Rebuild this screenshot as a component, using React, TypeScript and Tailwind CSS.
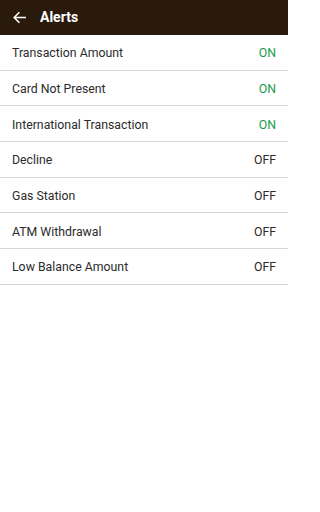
import React from "react";

const alerts = [
  { name: "Transaction Amount", on: true },
  { name: "Card Not Present", on: true },
  { name: "International Transaction", on: true },
  { name: "Decline", on: false },
  { name: "Gas Station", on: false },
  { name: "ATM Withdrawal", on: false },
  { name: "Low Balance Amount", on: false },
];

export default function App() {
  return (
    <div className="w-[288px] h-[512px] bg-white font-['Roboto',sans-serif]">
      <header className="h-[35px] bg-[#2a1a0b] flex items-center pl-[12px] gap-[13px]">
        <svg width="15" height="15" viewBox="0 0 24 24" fill="none" stroke="white" strokeWidth="2.5" strokeLinecap="square">
          <path d="M21 12H4M11 4.5L3.5 12L11 19.5" />
        </svg>
        <h1 className="text-white text-[14px] font-bold">Alerts</h1>
      </header>
      <ul>
        {alerts.map((a) => (
          <li key={a.name} className="h-[35.7px] flex items-center justify-between pl-3 pr-3 pt-[2px] border-b border-[#d6d6d6] text-[12.3px] text-[#2b2b2b]">
            <span>{a.name}</span>
            <span className={a.on ? "text-[#1a9b4b]" : "text-[#2b2b2b]"}>{a.on ? "ON" : "OFF"}</span>
          </li>
        ))}
      </ul>
    </div>
  );
}
